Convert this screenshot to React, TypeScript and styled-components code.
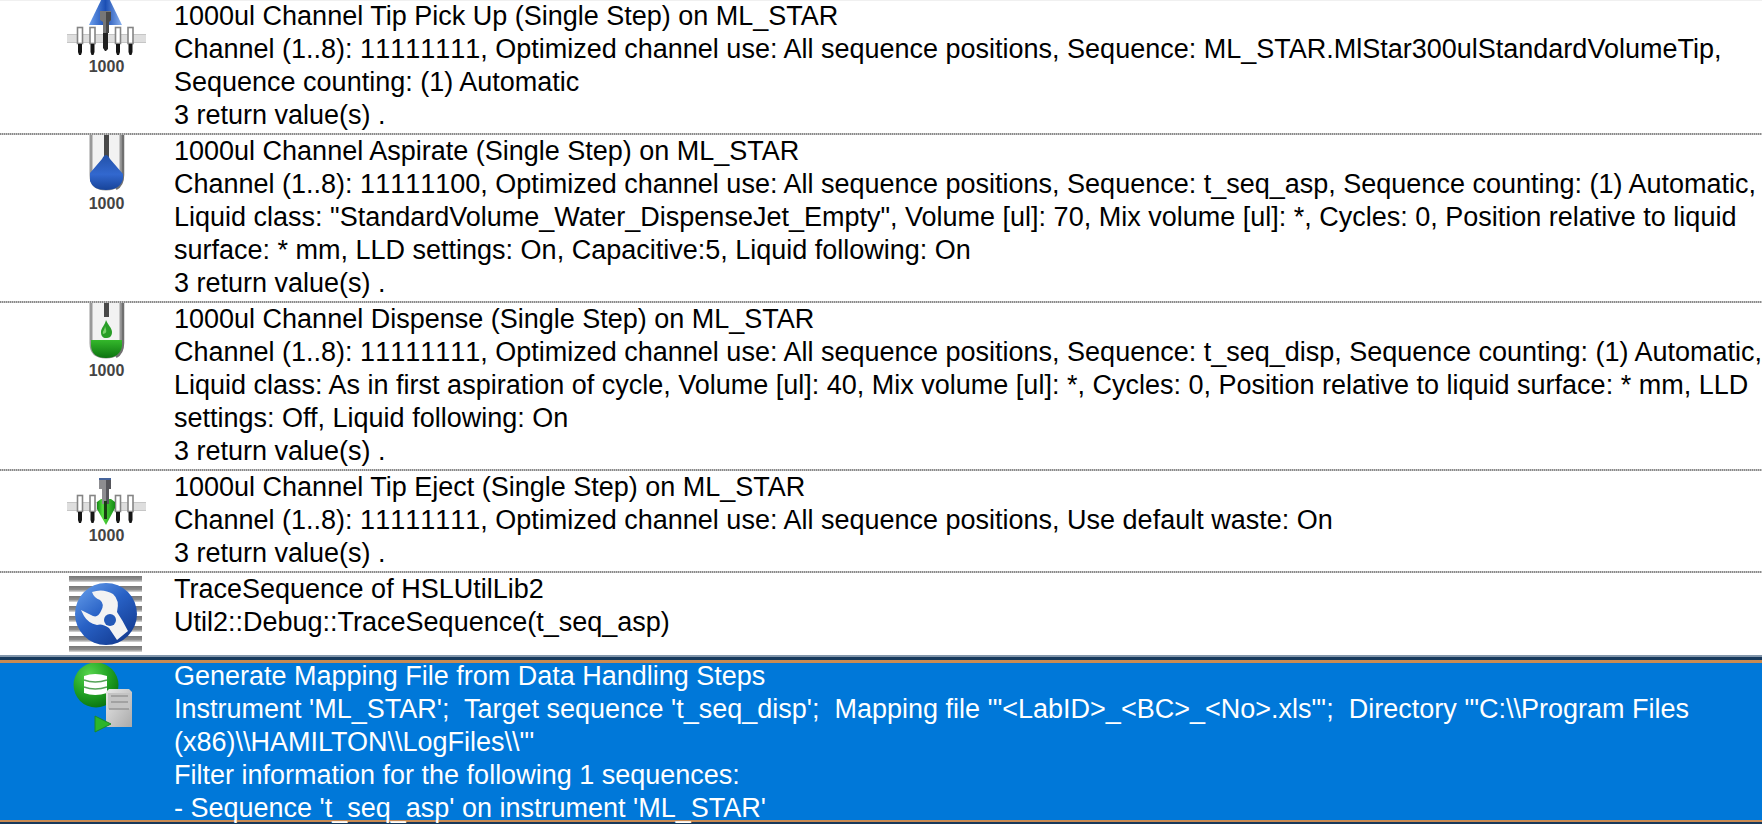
import React from "react";
import styled, { createGlobalStyle, css } from "styled-components";

const Global = createGlobalStyle`
  body { margin: 0; background: #fff; }
`;

const StepList = styled.ol`
  margin: 0;
  padding: 0 0 8px;
  list-style: none;
  overflow: hidden;
  color: #000;
  font-family: "Liberation Sans", Arial, sans-serif;
  font-size: 27px;
  line-height: 33px;
  font-kerning: normal;
  box-shadow: inset 0 1px 0 #f0f0f0;
`;

const dotted = css`
  &::after {
    content: "";
    grid-column: 1 / -1;
    height: 2px;
    background: repeating-linear-gradient(90deg, #8a8a8a 0 1px, #c4c4c4 1px 2px);
  }
`;

const Step = styled.li<{ $last?: boolean }>`
  display: grid;
  grid-template-columns: 174px minmax(0, 1fr);
  ${(p) => !p.$last && dotted}
`;

const SelectedStep = styled(Step)`
  color: #fff;
  background: #0078d9;
  border-top: 3px solid #c98a52;
  border-bottom: 2px solid #c98a52;
  box-shadow: 0 -3px 0 #17395c, 0 -5px 0 #8296ab, 0 2px 0 #17395c;
  margin-top: 2px;
`;

const IconCell = styled.div`
  display: flex;
  flex-direction: column;
  align-items: center;
  padding: 0 27px 0 66px;
`;

const IconLabel = styled.span`
  color: #444;
  font-size: 16px;
  font-weight: bold;
  line-height: 16px;
`;

const StepText = styled.div<{ $selected?: boolean }>`
  margin: ${(p) => (p.$selected ? "-3px -4px -5px 0" : "0 -4px 1px 0")};
`;

const Line = styled.p`
  margin: 0;
`;

const Digits = styled.span`
  font-kerning: none;
`;

const Channels = ({ y }: { y: number }) => (
  <>
    <rect x="1" y={y + 7} width="79" height="9" fill="#dedede" />
    <path d={`M1 ${y + 7.5}H80M1 ${y + 15.5}H80`} stroke="#c6c6c6" />
    {[14, 26.5, 52, 64.5].map((x) => (
      <g key={x}>
        <rect x={x - 2.5} y={y + 0.5} width="5" height="16" fill="#fff" stroke="#858585" strokeWidth="1.6" />
        <path d={`M${x - 2} ${y + 17}h4v8l-1 3h-2l-1 -3z`} fill="#151515" />
      </g>
    ))}
  </>
);

const PickUpIcon = () => (
  <svg width="81" height="59" aria-hidden="true">
    <defs>
      <linearGradient id="up" x1="0" x2="1">
        <stop offset="0" stopColor="#6da0ee" />
        <stop offset=".5" stopColor="#1c4fb4" />
        <stop offset="1" stopColor="#8bb2ef" />
      </linearGradient>
    </defs>
    <Channels y={27} />
    <path d="M39.500 -9L56 25H23z" fill="url(#up)" />
    <path d="M34 11h11v9l-2 2v11h-6V22l-3 -2z" fill="#777" />
    <path d="M40 12h5v8l-2 2v11h-3z" fill="#484848" />
    <path d="M37 33h5v16l-2 2h-1l-2 -3z" fill="#222" />
  </svg>
);

const Vessel = () => (
  <>
    <path d="M24 0V40Q24 55 40 55T56 40V0z" fill="#f2f2f2" />
    <path d="M25 0V40Q25 54 40 54T55 40V0" fill="none" stroke="#999" strokeWidth="3" />
    <path d="M57 0V40Q57 50 50 54" fill="none" stroke="#707070" strokeWidth="2.500" />
  </>
);

const AspirateIcon = () => (
  <svg width="81" height="61" aria-hidden="true">
    <defs>
      <linearGradient id="blue" x2="0" y2="1">
        <stop offset="0" stopColor="#2351a8" />
        <stop offset=".55" stopColor="#3268cf" />
        <stop offset="1" stopColor="#174399" />
      </linearGradient>
    </defs>
    <Vessel />
    <path d="M38 0h5v22h-5z" fill="#484848" />
    <path d="M40 20Q42 20 44 24L57 39V44Q54 55 40 55Q27 55 24 46V38L36 24Q38 20 40 20z" fill="url(#blue)" />
  </svg>
);

const DispenseIcon = () => (
  <svg width="81" height="60" aria-hidden="true">
    <defs>
      <linearGradient id="green" x2="0" y2="1">
        <stop offset="0" stopColor="#34b82b" />
        <stop offset="1" stopColor="#0d7410" />
      </linearGradient>
    </defs>
    <Vessel />
    <path d="M38 0h5v14h-5z" fill="#484848" />
    <path d="M40 17C42 22 46 25 46 29C46 34 43 35 40 35S35 33 35 29C35 25 39 22 40 17z" fill="#289d27" />
    <path d="M39 23C40 27 42 30 37 31C36 28 39 27 39 23z" fill="#79d36c" />
    <path d="M25 37H56V43Q54 55 40 55T25 43z" fill="url(#green)" />
  </svg>
);

const EjectIcon = () => (
  <svg width="81" height="57" aria-hidden="true">
    <defs>
      <linearGradient id="down" x1="0" x2="1">
        <stop offset="0" stopColor="#158716" />
        <stop offset=".3" stopColor="#55dd3e" />
        <stop offset="1" stopColor="#168c16" />
      </linearGradient>
    </defs>
    <Channels y={24} />
    <path d="M31 31L35 28H45L49 31V37L40 54L31 38z" fill="url(#down)" />
    <path d="M33 7h12v11h-2v15h-7V18h-3z" fill="#8d8d91" />
    <path d="M40 8h5v10h-2v15h-3z" fill="#55555b" />
    <path d="M33 7h12v2H33z" fill="#46649b" />
    <path d="M38 30h3v18h-3z" fill="#183d12" />
  </svg>
);

const TraceIcon = () => (
  <svg width="81" height="85" aria-hidden="true">
    <defs>
      <linearGradient id="ball" x1="0" y1="0" x2=".8" y2="1">
        <stop offset="0" stopColor="#6ba3ee" />
        <stop offset=".5" stopColor="#2861c5" />
        <stop offset="1" stopColor="#12398f" />
      </linearGradient>
      <linearGradient id="bar" x2="0" y2="1">
        <stop offset="0" stopColor="#777" />
        <stop offset=".6" stopColor="#8e8e8e" />
        <stop offset="1" stopColor="#ddd" />
      </linearGradient>
    </defs>
    {[3, 13, 23, 33, 43, 53, 63, 73].map((y) => (
      <rect key={y} x="3" y={y} width="73" height="6" fill="url(#bar)" />
    ))}
    <circle cx="40" cy="41" r="31" fill="url(#ball)" />
    <path d="M26 19Q37 15 47 21Q54 27 51 39Q57 48 62 58L51 67L43 55Q36 50 31 52Q22 50 18 43L15 37L27 43Q32 45 35 38Q39 31 34 27Q28 25 26 19z" fill="#f3f3f3" />
    <circle cx="44" cy="47" r="6" fill="#2459b8" />
  </svg>
);

const MappingIcon = () => (
  <svg width="81" height="74" aria-hidden="true">
    <defs>
      <radialGradient id="disc" cx=".35" cy=".25" r=".8">
        <stop offset="0" stopColor="#55d34b" />
        <stop offset=".55" stopColor="#22a324" />
        <stop offset="1" stopColor="#08730f" />
      </radialGradient>
      <linearGradient id="server" x2="1" y2="1">
        <stop offset="0" stopColor="#e8e8e8" />
        <stop offset="1" stopColor="#aaa" />
      </linearGradient>
    </defs>
    <circle cx="30" cy="22" r="22.500" fill="url(#disc)" />
    <path d="M18 13Q29 9 41 13V30Q29 34 18 30z" fill="#fff" />
    <path d="M18 17Q29 21 41 17M18 24Q29 28 41 24" fill="none" stroke="#54a358" strokeWidth="1.500" />
    <path d="M40 29L43 26H63L66 29V64H40z" fill="url(#server)" />
    <path d="M42 30H64V46H42z" fill="#c4c4c4" />
    <path d="M45 33H62M45 39H62M43 46H63" stroke="#969696" strokeWidth="1.500" />
    <path d="M29 53L45 61L29 69z" fill="#2cb52b" stroke="#198a28" />
  </svg>
);

type StepData = { icon: React.ReactNode; label?: string; lines: string[]; selected?: boolean };

const steps: StepData[] = [
  {
    icon: <PickUpIcon />,
    label: "1000",
    lines: [
      "1000ul Channel Tip Pick Up (Single Step) on ML_STAR",
      "Channel (1..8): 11111111, Optimized channel use: All sequence positions, Sequence: ML_STAR.MlStar300ulStandardVolumeTip, Sequence counting: (1) Automatic",
      "3 return value(s) .",
    ],
  },
  {
    icon: <AspirateIcon />,
    label: "1000",
    lines: [
      "1000ul Channel Aspirate (Single Step) on ML_STAR",
      'Channel (1..8): 11111100, Optimized channel use: All sequence positions, Sequence: t_seq_asp, Sequence counting: (1) Automatic, Liquid class: "StandardVolume_Water_DispenseJet_Empty", Volume [ul]: 70, Mix volume [ul]: *, Cycles: 0, Position relative to liquid surface: * mm, LLD settings: On, Capacitive:5, Liquid following: On',
      "3 return value(s) .",
    ],
  },
  {
    icon: <DispenseIcon />,
    label: "1000",
    lines: [
      "1000ul Channel Dispense (Single Step) on ML_STAR",
      "Channel (1..8): 11111111, Optimized channel use: All sequence positions, Sequence: t_seq_disp, Sequence counting: (1) Automatic, Liquid class: As in first aspiration of cycle, Volume [ul]: 40, Mix volume [ul]: *, Cycles: 0, Position relative to liquid surface: * mm, LLD settings: Off, Liquid following: On",
      "3 return value(s) .",
    ],
  },
  {
    icon: <EjectIcon />,
    label: "1000",
    lines: [
      "1000ul Channel Tip Eject (Single Step) on ML_STAR",
      "Channel (1..8): 11111111, Optimized channel use: All sequence positions, Use default waste: On",
      "3 return value(s) .",
    ],
  },
  {
    icon: <TraceIcon />,
    lines: ["TraceSequence of HSLUtilLib2", "Util2::Debug::TraceSequence(t_seq_asp)"],
  },
  {
    icon: <MappingIcon />,
    selected: true,
    lines: [
      "Generate Mapping File from Data Handling Steps",
      "Instrument 'ML_STAR';\u00a0 Target sequence 't_seq_disp';\u00a0 Mapping file '\"<LabID>_<BC>_<No>.xls\"';\u00a0 Directory '\"C:\\\\Program Files (x86)\\\\HAMILTON\\\\LogFiles\\\\\"'",
      "Filter information for the following 1 sequences:",
      "- Sequence 't_seq_asp' on instrument 'ML_STAR'",
    ],
  },
];

// Channel patterns keep evenly spaced digits so that positions can be compared between steps.
const withPatterns = (line: string) =>
  line.split(/([01]{8})/).map((part, i) => (i % 2 ? <Digits key={i}>{part}</Digits> : part));

export default function App() {
  return (
    <>
      <Global />
      <StepList>
        {steps.map((step, i) => {
          const Row = step.selected ? SelectedStep : Step;
          return (
            <Row key={i} $last={i >= steps.length - 2} aria-current={step.selected}>
              <IconCell>
                {step.icon}
                {step.label && <IconLabel>{step.label}</IconLabel>}
              </IconCell>
              <StepText $selected={step.selected}>
                {step.lines.map((line) => (
                  <Line key={line}>{withPatterns(line)}</Line>
                ))}
              </StepText>
            </Row>
          );
        })}
      </StepList>
    </>
  );
}
